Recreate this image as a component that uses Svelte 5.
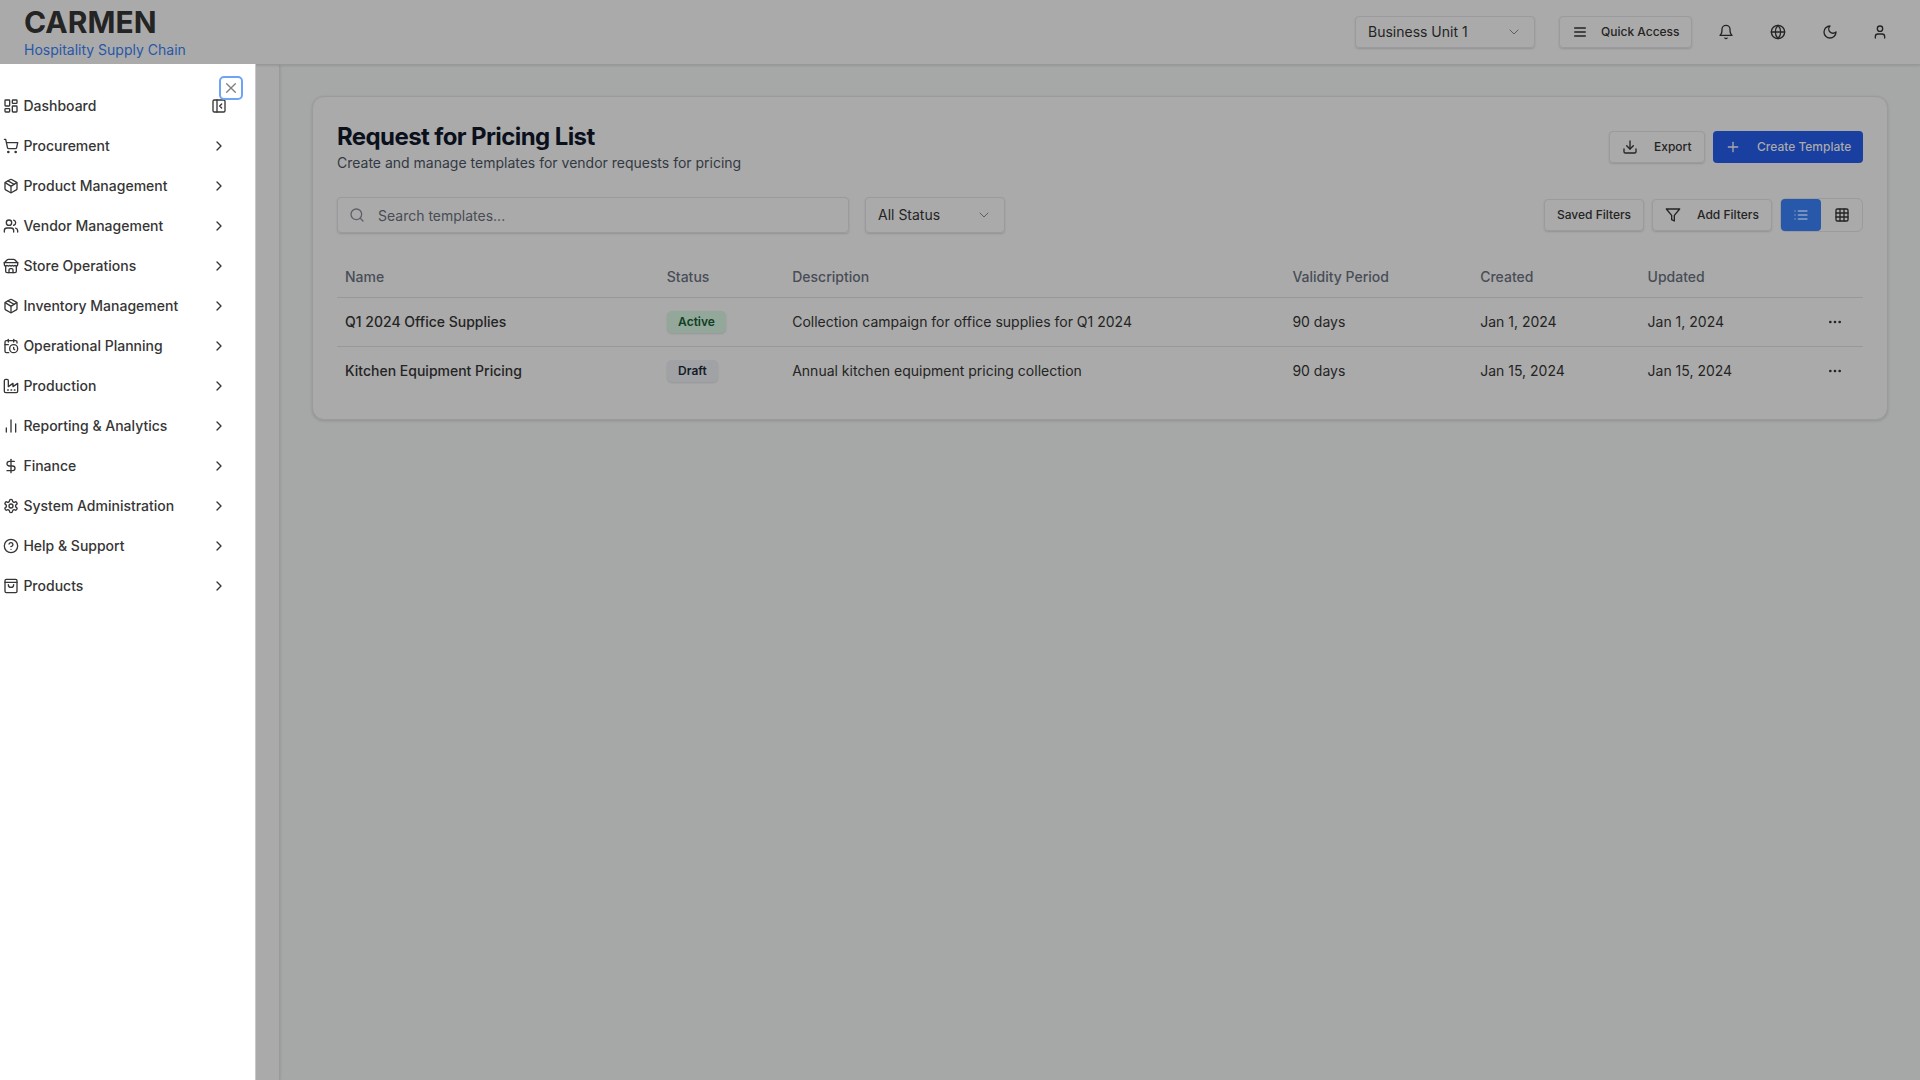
<script>
  const icons = {
    dashboard: '<rect width="7" height="9" x="3" y="3" rx="1"/><rect width="7" height="5" x="14" y="3" rx="1"/><rect width="7" height="9" x="14" y="12" rx="1"/><rect width="7" height="5" x="3" y="16" rx="1"/>',
    cart: '<circle cx="8" cy="21" r="1"/><circle cx="19" cy="21" r="1"/><path d="M2.05 2.05h2l2.66 12.42a2 2 0 0 0 2 1.58h9.78a2 2 0 0 0 1.95-1.57l1.65-7.43H5.12"/>',
    box: '<path d="M11 21.73a2 2 0 0 0 2 0l7-4A2 2 0 0 0 21 16V8a2 2 0 0 0-1-1.73l-7-4a2 2 0 0 0-2 0l-7 4A2 2 0 0 0 3 8v8a2 2 0 0 0 1 1.73z"/><path d="M12 22V12"/><path d="m3.3 7 7.703 4.734a2 2 0 0 0 1.994 0L20.7 7"/><path d="m7.5 4.27 9 5.15"/>',
    users: '<path d="M16 21v-2a4 4 0 0 0-4-4H6a4 4 0 0 0-4 4v2"/><circle cx="9" cy="7" r="4"/><path d="M22 21v-2a4 4 0 0 0-3-3.87"/><path d="M16 3.13a4 4 0 0 1 0 7.75"/>',
    store: '<path d="m2 7 4.41-4.41A2 2 0 0 1 7.83 2h8.34a2 2 0 0 1 1.42.59L22 7"/><path d="M4 12v8a2 2 0 0 0 2 2h12a2 2 0 0 0 2-2v-8"/><path d="M15 22v-4a2 2 0 0 0-2-2h-2a2 2 0 0 0-2 2v4"/><path d="M2 7h20"/><path d="M22 7v3a2 2 0 0 1-2 2a2.7 2.7 0 0 1-1.59-.63.7.7 0 0 0-.82 0A2.7 2.7 0 0 1 16 12a2.7 2.7 0 0 1-1.59-.63.7.7 0 0 0-.82 0A2.7 2.7 0 0 1 12 12a2.7 2.7 0 0 1-1.59-.63.7.7 0 0 0-.82 0A2.7 2.7 0 0 1 8 12a2.7 2.7 0 0 1-1.59-.63.7.7 0 0 0-.82 0A2.7 2.7 0 0 1 4 12a2 2 0 0 1-2-2V7"/>',
    calendar: '<path d="M21 7.5V6a2 2 0 0 0-2-2H5a2 2 0 0 0-2 2v14a2 2 0 0 0 2 2h3.5"/><path d="M16 2v4"/><path d="M8 2v4"/><path d="M3 10h5"/><path d="M17.5 17.5 16 16.3V14"/><circle cx="16" cy="16" r="6"/>',
    factory: '<path d="M2 20a2 2 0 0 0 2 2h16a2 2 0 0 0 2-2V8l-7 5V8l-7 5V4a2 2 0 0 0-2-2H4a2 2 0 0 0-2 2Z"/><path d="M17 18h1"/><path d="M12 18h1"/><path d="M7 18h1"/>',
    bars: '<path d="M5 21v-6"/><path d="M12 21V3"/><path d="M19 21V9"/>',
    dollar: '<path d="M12 2v20"/><path d="M17 5H9.5a3.5 3.5 0 0 0 0 7h5a3.5 3.5 0 0 1 0 7H6"/>',
    gear: '<path d="M12.22 2h-.44a2 2 0 0 0-2 2v.18a2 2 0 0 1-1 1.73l-.43.25a2 2 0 0 1-2 0l-.15-.08a2 2 0 0 0-2.73.73l-.22.38a2 2 0 0 0 .73 2.73l.15.1a2 2 0 0 1 1 1.72v.51a2 2 0 0 1-1 1.74l-.15.09a2 2 0 0 0-.73 2.73l.22.38a2 2 0 0 0 2.73.73l.15-.08a2 2 0 0 1 2 0l.43.25a2 2 0 0 1 1 1.73V20a2 2 0 0 0 2 2h.44a2 2 0 0 0 2-2v-.18a2 2 0 0 1 1-1.73l.43-.25a2 2 0 0 1 2 0l.15.08a2 2 0 0 0 2.73-.73l.22-.39a2 2 0 0 0-.73-2.73l-.15-.08a2 2 0 0 1-1-1.74v-.5a2 2 0 0 1 1-1.74l.15-.09a2 2 0 0 0 .73-2.73l-.22-.38a2 2 0 0 0-2.73-.73l-.15.08a2 2 0 0 1-2 0l-.43-.25a2 2 0 0 1-1-1.73V4a2 2 0 0 0-2-2z"/><circle cx="12" cy="12" r="3"/>',
    help: '<circle cx="12" cy="12" r="10"/><path d="M9.09 9a3 3 0 0 1 5.83 1c0 2-3 3-3 3"/><path d="M12 17h.01"/>',
    bag: '<rect width="18" height="20" x="3" y="2" rx="2"/><path d="M3 6.5h18"/><path d="M16 10a4 4 0 0 1-8 0"/>',
    chevronRight: '<path d="m9 18 6-6-6-6"/>',
    panel: '<rect width="18" height="18" x="3" y="3" rx="2"/><path d="M9 3v18"/><path d="m16 15-3-3 3-3"/>',
    close: '<path d="M18.5 5.5 5.5 18.5"/><path d="m5.5 5.5 13 13"/>',
    chevronDown: '<path d="m6 9 6 6 6-6"/>',
    menu: '<path d="M4 6h16"/><path d="M4 12h16"/><path d="M4 18h16"/>',
    bell: '<path d="M6 8a6 6 0 0 1 12 0c0 7 3 9 3 9H3s3-2 3-9"/><path d="M10.3 21a1.94 1.94 0 0 0 3.4 0"/>',
    globe: '<circle cx="12" cy="12" r="10"/><path d="M12 2a14.5 14.5 0 0 0 0 20 14.5 14.5 0 0 0 0-20"/><path d="M2 12h20"/>',
    moon: '<path d="M12 3a6 6 0 0 0 9 9 9 9 0 1 1-9-9Z"/>',
    user: '<path d="M19 21v-2a4 4 0 0 0-4-4H9a4 4 0 0 0-4 4v2"/><circle cx="12" cy="7" r="4"/>',
    download: '<path d="M21 15v4a2 2 0 0 1-2 2H5a2 2 0 0 1-2-2v-4"/><path d="m7 10 5 5 5-5"/><path d="M12 15V3"/>',
    plus: '<path d="M5 12h14"/><path d="M12 5v14"/>',
    search: '<circle cx="11" cy="11" r="8"/><path d="m21 21-4.3-4.3"/>',
    filter: '<path d="M22 3H2l8 9.46V19l4 2v-8.54z"/>',
    list: '<path d="M8 6h13"/><path d="M8 12h13"/><path d="M8 18h13"/><path d="M3 6h.01"/><path d="M3 12h.01"/><path d="M3 18h.01"/>',
    grid: '<rect width="18" height="18" x="3" y="3" rx="2"/><path d="M3 9h18"/><path d="M3 15h18"/><path d="M9 3v18"/><path d="M15 3v18"/>',
    dots: '<circle cx="12" cy="12" r="1"/><circle cx="19" cy="12" r="1"/><circle cx="5" cy="12" r="1"/>'
  };

  const menu = [
    ['Dashboard', 'dashboard'],
    ['Procurement', 'cart'],
    ['Product Management', 'box'],
    ['Vendor Management', 'users'],
    ['Store Operations', 'store'],
    ['Inventory Management', 'box'],
    ['Operational Planning', 'calendar'],
    ['Production', 'factory'],
    ['Reporting & Analytics', 'bars'],
    ['Finance', 'dollar'],
    ['System Administration', 'gear'],
    ['Help & Support', 'help'],
    ['Products', 'bag']
  ];

  const rows = [
    { name: 'Q1 2024 Office Supplies', status: 'Active', description: 'Collection campaign for office supplies for Q1 2024', validity: '90 days', created: 'Jan 1, 2024', updated: 'Jan 1, 2024' },
    { name: 'Kitchen Equipment Pricing', status: 'Draft', description: 'Annual kitchen equipment pricing collection', validity: '90 days', created: 'Jan 15, 2024', updated: 'Jan 15, 2024' }
  ];
</script>

{#snippet icon(name, cls = '')}
  <svg class="icon {cls}" viewBox="0 0 24 24" aria-hidden="true">{@html icons[name]}</svg>
{/snippet}

<div class="app">
  <header class="topbar">
    <div class="brand">
      <div class="logo">CARMEN</div>
      <div class="tagline">Hospitality Supply Chain</div>
    </div>
    <div class="tools">
      <button class="box unit"><span>Business Unit 1</span>{@render icon('chevronDown', 'faint')}</button>
      <button class="box btn quick">{@render icon('menu')}<span>Quick Access</span></button>
      <button class="tool">{@render icon('bell')}</button>
      <button class="tool">{@render icon('globe')}</button>
      <button class="tool moon">{@render icon('moon')}</button>
      <button class="tool last">{@render icon('user')}</button>
    </div>
  </header>

  <div class="body">
    <nav class="drawer">
      <ul>
        {#each menu as [label, glyph], i}
          <li>
            {@render icon(glyph)}
            <span>{label}</span>
            {@render icon(i === 0 ? 'panel' : 'chevronRight')}
          </li>
        {/each}
      </ul>
      <button class="close" aria-label="Close">{@render icon('close')}</button>
    </nav>
    <div class="rail"></div>

    <main>
      <section class="card">
        <div class="head">
          <div>
            <h1>Request for Pricing List</h1>
            <p>Create and manage templates for vendor requests for pricing</p>
          </div>
          <div class="actions">
            <button class="box btn export">{@render icon('download')}<span>Export</span></button>
            <button class="btn primary">{@render icon('plus')}<span>Create Template</span></button>
          </div>
        </div>

        <div class="filters">
          <div class="box search">{@render icon('search')}<span>Search templates...</span></div>
          <button class="box status"><span>All Status</span>{@render icon('chevronDown', 'faint')}</button>
          <div class="right">
            <button class="box btn saved">Saved Filters</button>
            <button class="box btn add">{@render icon('filter')}<span>Add Filters</span></button>
            <div class="toggle">
              <button class="on">{@render icon('list')}</button>
              <button>{@render icon('grid')}</button>
            </div>
          </div>
        </div>

        <div class="table">
          <div class="tr th">
            <span>Name</span><span>Status</span><span>Description</span><span>Validity Period</span><span>Created</span><span>Updated</span><span></span>
          </div>
          {#each rows as r}
            <div class="tr">
              <span class="name">{r.name}</span>
              <span><b class="badge {r.status.toLowerCase()}">{r.status}</b></span>
              <span>{r.description}</span>
              <span>{r.validity}</span>
              <span>{r.created}</span>
              <span>{r.updated}</span>
              <span class="more">{@render icon('dots')}</span>
            </div>
          {/each}
        </div>
      </section>
    </main>
  </div>
</div>

<style>
  :global(body) { margin: 0; overflow: hidden; }
  .app, .app * { box-sizing: border-box; }
  .app {
    height: 100vh;
    display: flex;
    flex-direction: column;
    background: #a5a8a7;
    color: #242424;
    font: 14px/20px Inter, sans-serif;
  }
  button { font: inherit; color: inherit; border: 0; background: none; padding: 0; }
  h1, p, ul { margin: 0; padding: 0; }
  .icon {
    width: 16px;
    height: 16px;
    flex: none;
    display: block;
    fill: none;
    stroke: currentColor;
    stroke-width: 2;
    stroke-linecap: round;
    stroke-linejoin: round;
  }
  .faint { color: #5e5e5e; stroke-width: 1.5; }

  .topbar {
    height: 65px;
    flex: none;
    display: flex;
    justify-content: space-between;
    padding: 0 24px;
    background: #aaaaaa;
    border-bottom: 1px solid #98989c;
    box-shadow: 0 1px 2px rgba(0, 0, 0, 0.1);
    z-index: 1;
  }
  .logo { font-size: 30px; line-height: 36px; font-weight: 700; padding-top: 4px; height: 40px; }
  .tagline { color: #2757a8; }
  .tools { display: flex; align-items: center; height: 64px; }
  .box {
    border: 1px solid #9a9a9f;
    border-radius: 4px;
    box-shadow: 0 1px 2px rgba(0, 0, 0, 0.14);
    display: flex;
    align-items: center;
  }
  .btn { height: 32px; font-size: 12px; line-height: 16px; font-weight: 500; display: flex; align-items: center; }
  .unit { width: 180px; height: 32px; padding: 0 12px; justify-content: space-between; margin-right: 24px; }
  .quick { width: 133px; padding-left: 12px; gap: 13px; margin-right: 18px; }
  .tool { width: 32px; height: 32px; display: grid; place-items: center; margin-right: 20px; }
  .tool.moon { margin-right: 18px; }
  .tool.last { margin-right: 0; }

  .body { flex: 1; display: flex; min-height: 0; }
  .drawer {
    position: relative;
    z-index: 2;
    width: 256px;
    margin-top: -1px;
    padding-top: 22px;
    background: #ffffff;
    border-right: 1px solid #c8c8ca;
    color: #363636;
  }
  ul { list-style: none; }
  li { height: 40px; display: flex; align-items: center; gap: 4px; padding: 0 28.5px 0 3.4px; font-weight: 500; }
  li span { flex: 1; }
  .close {
    position: absolute;
    top: 12px;
    left: 218.5px;
    width: 24px;
    height: 24px;
    display: grid;
    place-items: center;
    border: 2px solid #6fa3f7;
    border-radius: 5px;
    color: #808080;
  }
  .rail { width: 24px; background: #aaaaaa; border-right: 1px solid #9a9a9e; box-shadow: 1px 0 2px rgba(0, 0, 0, 0.08); }

  main { flex: 1; padding: 31px 32px 32px 32px; }
  .card {
    height: 324px;
    padding: 24px;
    background: #aaaaaa;
    border: 1px solid #9a9a9f;
    border-radius: 12px;
    box-shadow: 0 1px 3px rgba(0, 0, 0, 0.14);
  }
  .head { display: flex; justify-content: space-between; height: 76px; }
  h1 { font-size: 24px; line-height: 32px; font-weight: 700; letter-spacing: -0.6px; color: #0b111c; }
  p { color: #323943; }
  .actions { display: flex; gap: 8px; padding-top: 10px; }
  .export { width: 96px; padding-left: 12px; gap: 16px; }
  .primary { width: 150px; padding-left: 12px; gap: 16px; background: #193fa0; color: #aaaaaa; border-radius: 4px; }
  .filters { display: flex; align-items: center; gap: 16px; height: 36px; }
  .search { width: 512px; height: 36px; padding-left: 11px; gap: 13px; color: #484c55; }
  .search span { padding-top: 2px; }
  .search .icon { color: #5c6068; }
  .status { width: 140px; height: 36px; padding: 0 12px; justify-content: space-between; }
  .right { display: flex; align-items: center; gap: 8px; margin-left: auto; }
  .saved { width: 100px; justify-content: center; }
  .add { width: 120px; padding-left: 12px; gap: 16px; }
  .toggle { display: flex; width: 83px; height: 34px; border: 1px solid #9a9a9f; border-radius: 6px; }
  .toggle button { width: 41px; display: grid; place-items: center; border-radius: 4px; }
  .toggle .on { width: 40px; background: #2858a9; color: #8ea3c8; }

  .table { padding-top: 17px; }
  .tr {
    height: 49px;
    display: grid;
    grid-template-columns: 321.8px 125.4px 500.2px 187.8px 167.4px 1fr 56px;
    align-items: center;
    padding-left: 8px;
    border-bottom: 1px solid #98989c;
  }
  .tr:last-child { border-bottom: 0; padding-bottom: 1px; }
  .th { height: 48px; padding-top: 7px; color: #484d57; font-weight: 500; }
  .name { font-weight: 500; }
  .badge {
    display: inline-block;
    vertical-align: top;
    padding: 3px 11.3px;
    font-size: 12px;
    line-height: 16px;
    font-weight: 600;
    border-radius: 5px;
    box-shadow: 0 1px 2px rgba(0, 0, 0, 0.12);
  }
  .active { background: #93a79a; color: #0f4024; }
  .draft { background: #a0a2a5; color: #151c28; }
  .more { padding-left: 20px; }
</style>
